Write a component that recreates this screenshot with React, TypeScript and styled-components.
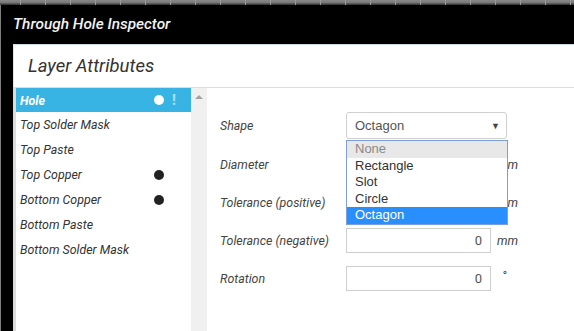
import React from "react";
import styled, { createGlobalStyle } from "styled-components";

const GlobalStyle = createGlobalStyle`
  html, body { margin: 0; padding: 0; }
  body {
    overflow: hidden;
    background: #7d7d7d;
    font-family: Roboto, "Liberation Sans", sans-serif;
  }
`;

const Desktop = styled.div`
  height: 331px;
  box-sizing: border-box;
  padding: 5px 0 0 1px;
  background:
    repeating-linear-gradient(90deg, transparent 0 20px, #9a9a9a 20px 21px, transparent 21px 25px),
    linear-gradient(180deg, #8a8a8a 0, #767676 3px, #3c3c3c 4px, #3c3c3c 5px);
  background-size: 100% 5px, 100% 5px;
  background-repeat: no-repeat;
  display: flex;
`;

const Window = styled.div`
  flex: 1;
  background: #000;
  display: flex;
  flex-direction: column;
  padding-left: 12px;
`;

const TitleBar = styled.div`
  height: 39px;
  display: flex;
  align-items: center;
  padding-bottom: 2px;
  box-sizing: border-box;
  color: #f2f2f2;
  font: italic 500 15.4px Roboto, sans-serif;
`;

const Panel = styled.div`
  flex: 1;
  background: #fff;
  display: flex;
  flex-direction: column;
  border-top: 1px solid #cfdde2;
  min-height: 0;
`;

const PanelHeader = styled.div`
  height: 43px;
  box-sizing: border-box;
  display: flex;
  align-items: center;
  padding: 0 0 1px 14px;
  border-bottom: 1px solid #dcdcdc;
  border-left: 1px solid #e4e4e4;
  color: #333;
  font: italic 400 18.5px Roboto, sans-serif;
`;

const Body = styled.div`
  flex: 1;
  display: flex;
  min-height: 0;
`;

const LayerList = styled.div`
  width: 178px;
  box-sizing: border-box;
  border-left: 3px solid #dcdcdc;
  display: flex;
  flex-direction: column;
`;

const LayerRow = styled.div<{ $active?: boolean }>`
  height: 25px;
  flex: none;
  display: flex;
  align-items: center;
  padding: 0 11px 0 4px;
  background: ${(p) => (p.$active ? "#37b4e4" : "transparent")};
  color: ${(p) => (p.$active ? "#fff" : "#333")};
  font: italic ${(p) => (p.$active ? 700 : 400)} 12.4px Roboto, sans-serif;
  &:first-child { height: 24px; }
`;

const LayerName = styled.span`
  flex: 1;
`;

const Dot = styled.span<{ $color: string }>`
  width: 10px;
  height: 10px;
  border-radius: 50%;
  background: ${(p) => p.$color};
  margin-right: 4px;
`;

const Bang = styled.span<{ $show: boolean }>`
  width: 12px;
  text-align: center;
  color: #a6dcf2;
  font: 900 14px Roboto, sans-serif;
  visibility: ${(p) => (p.$show ? "visible" : "hidden")};
`;

const ScrollTrack = styled.div`
  width: 16px;
  background: #f0f0f0;
  display: flex;
  justify-content: center;
  padding-top: 7px;
  box-sizing: border-box;
`;

const UpArrow = styled.div`
  width: 0;
  height: 0;
  border-left: 4px solid transparent;
  border-right: 4px solid transparent;
  border-bottom: 4px solid #a3a3a3;
`;

const Form = styled.div`
  flex: 1;
  display: flex;
  flex-direction: column;
  gap: 13px;
  padding: 24px 0 0 13px;
`;

const FieldRow = styled.div`
  display: flex;
  align-items: center;
  height: 25px;
  &:first-child { height: 27px; }
`;

const Label = styled.div`
  width: 126px;
  color: #444;
  font: italic 400 12.4px Roboto, sans-serif;
`;

const SelectWrap = styled.div`
  position: relative;
  width: 161px;
  height: 27px;
`;

const SelectBox = styled.div`
  height: 100%;
  box-sizing: border-box;
  border: 1px solid #cfcfcf;
  border-radius: 3px;
  display: flex;
  align-items: center;
  justify-content: space-between;
  padding: 0 6px 0 8px;
  color: #555;
  font: 400 13px "Liberation Sans", Arial, sans-serif;
`;

const Caret = styled.span`
  font-size: 9px;
  color: #444;
`;

const OptionList = styled.div`
  position: absolute;
  left: 0;
  top: 28px;
  width: 162px;
  box-sizing: border-box;
  border: 1px solid #7b9fd6;
  background: #fff;
  z-index: 2;
  display: flex;
  flex-direction: column;
`;

const Option = styled.div<{ $state: "disabled" | "normal" | "selected" }>`
  height: 16.6px;
  line-height: 16px;
  padding-left: 8px;
  font: 400 13px "Liberation Sans", Arial, sans-serif;
  color: ${(p) => (p.$state === "disabled" ? "#8a8a8a" : p.$state === "selected" ? "#fff" : "#333")};
  background: ${(p) => (p.$state === "disabled" ? "#e8e8e8" : p.$state === "selected" ? "#2a8ffe" : "transparent")};
`;

const NumInput = styled.div`
  width: 145px;
  height: 25px;
  box-sizing: border-box;
  border: 1px solid #cfcfcf;
  display: flex;
  align-items: center;
  justify-content: flex-end;
  padding-right: 8px;
  color: #555;
  font: 400 13px Roboto, sans-serif;
`;

const Unit = styled.span<{ $raised?: boolean }>`
  margin-left: ${(p) => (p.$raised ? "11px" : "6px")};
  color: #444;
  font: italic 400 12.4px Roboto, sans-serif;
  align-self: ${(p) => (p.$raised ? "flex-start" : "center")};
  margin-top: ${(p) => (p.$raised ? "2px" : "0")};
`;

const layers = [
  { name: "Hole", dot: "#fff", bang: true, active: true },
  { name: "Top Solder Mask" },
  { name: "Top Paste" },
  { name: "Top Copper", dot: "#222" },
  { name: "Bottom Copper", dot: "#222" },
  { name: "Bottom Paste" },
  { name: "Bottom Solder Mask" },
] as { name: string; dot?: string; bang?: boolean; active?: boolean }[];

const options: { label: string; state: "disabled" | "normal" | "selected" }[] = [
  { label: "None", state: "disabled" },
  { label: "Rectangle", state: "normal" },
  { label: "Slot", state: "normal" },
  { label: "Circle", state: "normal" },
  { label: "Octagon", state: "selected" },
];

const numericFields = [
  { label: "Diameter", unit: "mm" },
  { label: "Tolerance (positive)", unit: "mm" },
  { label: "Tolerance (negative)", unit: "mm" },
  { label: "Rotation", unit: "°", raised: true },
];

export default function App() {
  return (
    <>
      <GlobalStyle />
      <Desktop>
        <Window>
          <TitleBar>Through Hole Inspector</TitleBar>
          <Panel>
            <PanelHeader>Layer Attributes</PanelHeader>
            <Body>
              <LayerList>
                {layers.map((l) => (
                  <LayerRow key={l.name} $active={l.active}>
                    <LayerName>{l.name}</LayerName>
                    {l.dot && <Dot $color={l.dot} />}
                    <Bang $show={!!l.bang}>!</Bang>
                  </LayerRow>
                ))}
              </LayerList>
              <ScrollTrack>
                <UpArrow />
              </ScrollTrack>
              <Form>
                <FieldRow>
                  <Label>Shape</Label>
                  <SelectWrap>
                    <SelectBox>
                      <span>Octagon</span>
                      <Caret>▼</Caret>
                    </SelectBox>
                    <OptionList>
                      {options.map((o) => (
                        <Option key={o.label} $state={o.state}>
                          {o.label}
                        </Option>
                      ))}
                    </OptionList>
                  </SelectWrap>
                </FieldRow>
                {numericFields.map((f) => (
                  <FieldRow key={f.label}>
                    <Label>{f.label}</Label>
                    <NumInput>0</NumInput>
                    <Unit $raised={f.raised}>{f.unit}</Unit>
                  </FieldRow>
                ))}
              </Form>
            </Body>
          </Panel>
        </Window>
      </Desktop>
    </>
  );
}
